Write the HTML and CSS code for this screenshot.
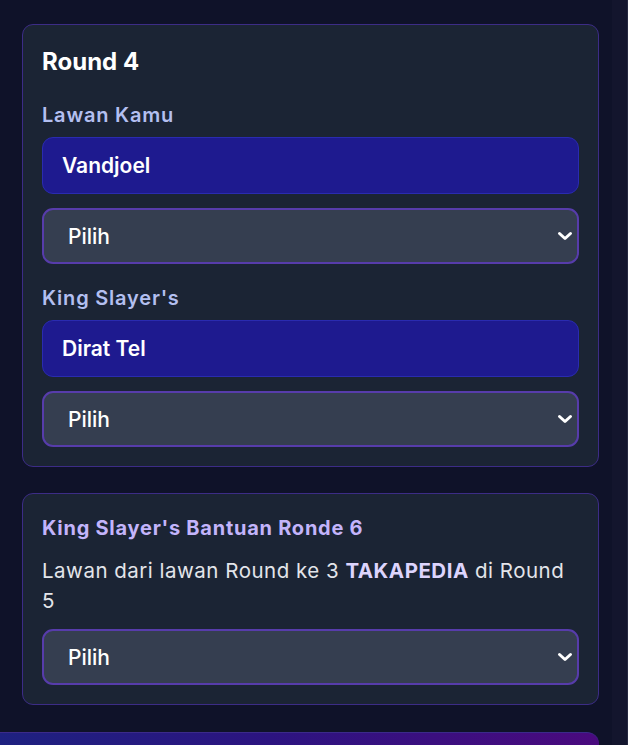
FILE: index.html
```html
<!DOCTYPE html>
<html lang="id">
<head>
<meta charset="utf-8">
<title>Round 4</title>
<link rel="stylesheet" href="styles.css">
</head>
<body>
<div class="page">
  <main class="main">
    <section class="card">
      <h2 class="heading">Round 4</h2>
      <div class="label">Lawan Kamu</div>
      <div class="name-box">Vandjoel</div>
      <div class="select-wrap">
        <select class="select"><option>Pilih</option></select>
        <svg class="chev" width="16" height="10" viewBox="0 0 16 10"><path d="M2.5 2.5l5.5 5 5.5-5" fill="none" stroke="#fff" stroke-width="3" stroke-linecap="round" stroke-linejoin="round"/></svg>
      </div>
      <div class="label label-gap">King Slayer's</div>
      <div class="name-box">Dirat Tel</div>
      <div class="select-wrap">
        <select class="select"><option>Pilih</option></select>
        <svg class="chev" width="16" height="10" viewBox="0 0 16 10"><path d="M2.5 2.5l5.5 5 5.5-5" fill="none" stroke="#fff" stroke-width="3" stroke-linecap="round" stroke-linejoin="round"/></svg>
      </div>
    </section>

    <section class="card card-2">
      <div class="help-title">King Slayer's Bantuan Ronde 6</div>
      <p class="help-text">Lawan dari lawan Round ke 3 <strong class="hl">TAKAPEDIA</strong> di Round 5</p>
      <div class="select-wrap select-tight">
        <select class="select"><option>Pilih</option></select>
        <svg class="chev" width="16" height="10" viewBox="0 0 16 10"><path d="M2.5 2.5l5.5 5 5.5-5" fill="none" stroke="#fff" stroke-width="3" stroke-linecap="round" stroke-linejoin="round"/></svg>
      </div>
    </section>

    <div class="bottom-bar"></div>
  </main>
  <div class="scroll-strip"></div>
</div>
</body>
</html>
```

FILE: styles.css
```css
* { box-sizing: border-box; }

html, body {
  margin: 0;
  height: 100%;
  overflow: hidden;
}

body {
  background: #0f1229;
  font-family: Inter, "Noto Sans", "Liberation Sans", sans-serif;
  color: #ffffff;
}

.page {
  display: flex;
  height: 745px;
}

.main {
  width: 612px;
  padding: 24px 13px 0 22px;
}

.scroll-strip {
  width: 16px;
  background: #13152d;
  border-right: 1px solid #24273f;
}

.card {
  background: #1b2434;
  border: 1.5px solid #3c2c86;
  border-radius: 11px;
  padding: 21px 19px 19px;
}

.card-2 {
  margin-top: 26px;
}

.heading {
  margin: 0 0 24px;
  font-size: 24px;
  line-height: 32px;
  font-weight: 700;
  color: #ffffff;
}

.label {
  font-size: 20px;
  line-height: 26px;
  font-weight: 600;
  letter-spacing: 0.8px;
  color: #b3bff0;
  margin-bottom: 9px;
}

.label-gap {
  margin-top: 21px;
}

.name-box {
  height: 57px;
  display: flex;
  align-items: center;
  padding-left: 19px;
  background: #1e1a8f;
  border: 1.5px solid #2a2bb0;
  border-radius: 11px;
  font-size: 21px;
  font-weight: 600;
  color: #ffffff;
}

.select-wrap {
  position: relative;
  margin-top: 14px;
}

.select-tight {
  margin-top: 13px;
}

.select {
  display: block;
  width: 100%;
  height: 56px;
  appearance: none;
  -webkit-appearance: none;
  background: #353e50;
  border: 2px solid #573cab;
  border-radius: 11px;
  padding: 0 40px 0 24px;
  font-family: inherit;
  font-size: 21px;
  font-weight: 500;
  color: #ffffff;
  outline: none;
}

.chev {
  position: absolute;
  right: 6px;
  top: 23px;
  pointer-events: none;
}

.help-title {
  font-size: 20px;
  line-height: 26px;
  font-weight: 700;
  letter-spacing: 0.75px;
  color: #c3b4fb;
  margin-bottom: 15px;
}

.help-text {
  margin: 0;
  font-size: 20.5px;
  line-height: 30px;
  font-weight: 400;
  letter-spacing: 0.5px;
  color: #e3e5ea;
}

.hl {
  font-weight: 700;
  color: #ddd4fd;
}

.bottom-bar {
  margin-top: 27px;
  margin-left: -22px;
  height: 40px;
  border-radius: 0 12px 0 0;
  border-top: 1px solid #3b2a8a;
  background: linear-gradient(90deg, #1e2180 0%, #2c1480 45%, #4a0a7e 100%);
}
```
